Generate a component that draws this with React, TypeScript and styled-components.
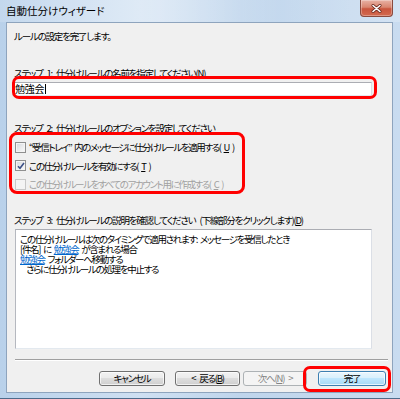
import React from "react";
import styled, { createGlobalStyle } from "styled-components";

const GlobalStyle = createGlobalStyle`
  html, body {
    margin: 0;
    padding: 0;
  }
  body {
    width: 400px;
    height: 399px;
    overflow: hidden;
    font-family: "Noto Sans CJK JP", "Noto Sans", sans-serif;
    font-size: 9.5px;
    letter-spacing: -1.2px;
    word-spacing: 3px;
    font-feature-settings: "palt";
    color: #000;
  }
`;

const Window = styled.div`
  width: 400px;
  height: 399px;
  box-sizing: border-box;
  display: flex;
  flex-direction: column;
  background: linear-gradient(to right, #b9d1ea 0%, #cfe0f2 35%, #bfd5ec 60%, #c9dcf0 100%);
  border-bottom: 1px solid #4d6b8a;
`;

const TitleBar = styled.div`
  height: 22px;
  display: flex;
  align-items: flex-start;
  justify-content: space-between;
  padding-left: 6px;
  background: linear-gradient(to right, rgba(255,255,255,0.15), rgba(255,255,255,0.35) 40%, rgba(255,255,255,0.05) 70%, rgba(255,255,255,0.2));
`;

const Title = styled.span`
  margin-top: 5px;
  line-height: 12px;
  font-size: 10.5px;
  letter-spacing: 0;
  color: #000;
`;

const CloseButton = styled.div`
  width: 33px;
  height: 17px;
  margin-right: 7px;
  box-sizing: border-box;
  display: flex;
  align-items: center;
  justify-content: center;
  border: 1px solid #8a4a3e;
  border-top: none;
  border-radius: 0 0 4px 4px;
  background: linear-gradient(to bottom, #e8b2a5 0%, #d98670 45%, #c9553d 55%, #d36a4f 100%);
  box-shadow: inset 0 0 0 1px rgba(255, 255, 255, 0.3);
`;

const Client = styled.div`
  flex: 1;
  margin: 0 7px 5px 6px;
  border: 1px solid #8ea4bd;
  background: #f0f0f0;
  display: flex;
  flex-direction: column;
  padding: 7px 0 0 7px;
`;

const Text = styled.div<{ $gap?: number; $muted?: boolean }>`
  line-height: 12px;
  height: 12px;
  margin-top: ${(p) => p.$gap ?? 0}px;
  color: ${(p) => (p.$muted ? "#a0a0a0" : "#000")};
  white-space: nowrap;
`;

const Highlight = styled.div<{ $inset: string; $radius: number }>`
  position: relative;
  align-self: flex-start;
  &::after {
    content: "";
    position: absolute;
    inset: ${(p) => p.$inset};
    border: 3px solid #ff0000;
    border-radius: ${(p) => p.$radius}px;
    pointer-events: none;
  }
`;

const NameInput = styled.div`
  margin: 3px 0 0 -2px;
  width: 360px;
  height: 14px;
  box-sizing: border-box;
  border: 1px solid #abadb3;
  border-color: #abadb3 #dbdfe6 #e3e9ef #e2e3ea;
  background: #fff;
  padding-left: 2px;
  line-height: 12px;
  font-size: 10px;
  letter-spacing: -0.3px;
  display: flex;
  align-items: center;
`;

const Caret = styled.span`
  display: inline-block;
  width: 1px;
  height: 10px;
  margin-left: 1px;
  background: #000;
`;

const OptionList = styled.div`
  margin-top: 4px;
  width: 226px;
  display: flex;
  flex-direction: column;
`;

const OptionRow = styled.label<{ $disabled?: boolean }>`
  height: 18.5px;
  display: flex;
  align-items: center;
  padding-left: 1px;
  gap: 3px;
  letter-spacing: -1.4px;
  word-spacing: 2px;
  color: ${(p) => (p.$disabled ? "#a0a0a0" : "#000")};
  white-space: nowrap;
`;

const Box = styled.span<{ $disabled?: boolean }>`
  width: 11px;
  height: 11px;
  flex: none;
  box-sizing: border-box;
  border: 1px solid ${(p) => (p.$disabled ? "#c8c8c8" : "#8f8f8f")};
  background: ${(p) =>
    p.$disabled
      ? "#f4f4f4"
      : "linear-gradient(135deg, #d2d5da 0%, #e9eaec 50%, #fafafa 100%)"};
  box-shadow: inset 0 0 0 1px #f4f4f4;
  display: flex;
  align-items: center;
  justify-content: center;
`;

const Description = styled.div`
  margin: 3px 0 0 1px;
  width: 357px;
  height: 120px;
  box-sizing: border-box;
  border: 1px solid #abadb3;
  border-color: #abadb3 #dbdfe6 #e3e9ef #b5b8bf;
  background: #fff;
  padding: 4px 0 0 4px;
  letter-spacing: -1.3px;
  word-spacing: 2px;
`;

const DescLine = styled.div<{ $indent?: number }>`
  line-height: 10.3px;
  height: 10.3px;
  padding-left: ${(p) => p.$indent ?? 0}px;
  white-space: nowrap;
`;

const LinkText = styled.span`
  color: #0066cc;
  text-decoration: underline;
`;

const Separator = styled.div`
  margin: 10px 0 0 1px;
  width: 373px;
  height: 0;
  border-top: 1px solid #a0a0a0;
  border-bottom: 1px solid #ffffff;
`;

const ButtonRow = styled.div`
  margin-top: 10px;
  padding-right: 6px;
  display: flex;
  justify-content: flex-end;
  align-items: center;
`;

const Button = styled.div<{ $w: number; $gap?: number; $variant?: "default" | "primary" | "disabled" }>`
  width: ${(p) => p.$w}px;
  height: 15px;
  margin-left: ${(p) => p.$gap ?? 0}px;
  box-sizing: border-box;
  border-radius: 3px;
  display: flex;
  align-items: center;
  justify-content: center;
  line-height: 12px;
  white-space: pre;
  border: 1px solid
    ${(p) => (p.$variant === "primary" ? "#3c7fb1" : p.$variant === "disabled" ? "#adb2b5" : "#707070")};
  color: ${(p) => (p.$variant === "disabled" ? "#838383" : "#000")};
  background: ${(p) =>
    p.$variant === "primary"
      ? "linear-gradient(to bottom, #eaf6fd 0%, #d9f0fc 45%, #bee6fd 50%, #a7d9f5 100%)"
      : p.$variant === "disabled"
      ? "#f4f4f4"
      : "linear-gradient(to bottom, #f2f2f2 0%, #ebebeb 45%, #dddddd 50%, #cfcfcf 100%)"};
  box-shadow: inset 0 0 0 1px
    ${(p) => (p.$variant === "disabled" ? "transparent" : "rgba(255,255,255,0.7)")};
`;

const Check = () => (
  <svg width="8" height="8" viewBox="0 0 8 8">
    <path d="M1 4.2 L3 6.3 L7 1" fill="none" stroke="#3b4f86" strokeWidth="1.6" />
  </svg>
);

const CloseIcon = () => (
  <svg width="11" height="9" viewBox="0 0 11 9">
    <path d="M2 1.5 L9 7.5 M9 1.5 L2 7.5" stroke="#6b2a1f" strokeWidth="3" strokeLinecap="round" />
    <path d="M2 1.5 L9 7.5 M9 1.5 L2 7.5" stroke="#ffffff" strokeWidth="1.6" strokeLinecap="round" />
  </svg>
);

const App: React.FC = () => {
  return (
    <>
      <GlobalStyle />
      <Window>
        <TitleBar>
          <Title>自動仕分けウィザード</Title>
          <CloseButton>
            <CloseIcon />
          </CloseButton>
        </TitleBar>
        <Client>
          <Text>ルールの設定を完了します。</Text>

          <Text $gap={25}>
            ステップ 1: 仕分けルールの名前を指定してください(<u>N</u>)
          </Text>
          <Highlight $inset="-3px -5px -3px -2px" $radius={7}>
            <NameInput>
              勉強会
              <Caret />
            </NameInput>
          </Highlight>

          <Text $gap={26}>ステップ 2: 仕分けルールのオプションを設定してください</Text>
          <Highlight $inset="-2px -5px 0px -5px" $radius={8}>
            <OptionList>
              <OptionRow>
                <Box />
                “受信トレイ” 内のメッセージに仕分けルールを適用する(<u>U</u>)
              </OptionRow>
              <OptionRow>
                <Box>
                  <Check />
                </Box>
                この仕分けルールを有効にする(<u>T</u>)
              </OptionRow>
              <OptionRow $disabled>
                <Box $disabled />
                この仕分けルールをすべてのアカウント用に作成する(<u>C</u>)
              </OptionRow>
            </OptionList>
          </Highlight>

          <Text $gap={20}>
            ステップ 3: 仕分けルールの説明を確認してください (下線部分をクリックします)(<u>D</u>)
          </Text>
          <Description>
            <DescLine>この仕分けルールは次のタイミングで適用されます: メッセージを受信したとき</DescLine>
            <DescLine>
              [件名] に <LinkText>勉強会</LinkText> が含まれる場合
            </DescLine>
            <DescLine>
              <LinkText>勉強会</LinkText> フォルダーへ移動する
            </DescLine>
            <DescLine $indent={6}>さらに仕分けルールの処理を中止する</DescLine>
          </Description>

          <Separator />

          <ButtonRow>
            <Button $w={66}>キャンセル</Button>
            <Button $w={65} $gap={10}>
              {"< 戻る("}
              <u>B</u>)
            </Button>
            <Button $w={64} $gap={3} $variant="disabled">
              次へ(<u>N</u>
              {") >"}
            </Button>
            <Highlight $inset="-5px -5px -6px -4px" $radius={7}>
              <Button $w={68} $gap={11} $variant="primary">
                完了
              </Button>
            </Highlight>
          </ButtonRow>
        </Client>
      </Window>
    </>
  );
};

export default App;
